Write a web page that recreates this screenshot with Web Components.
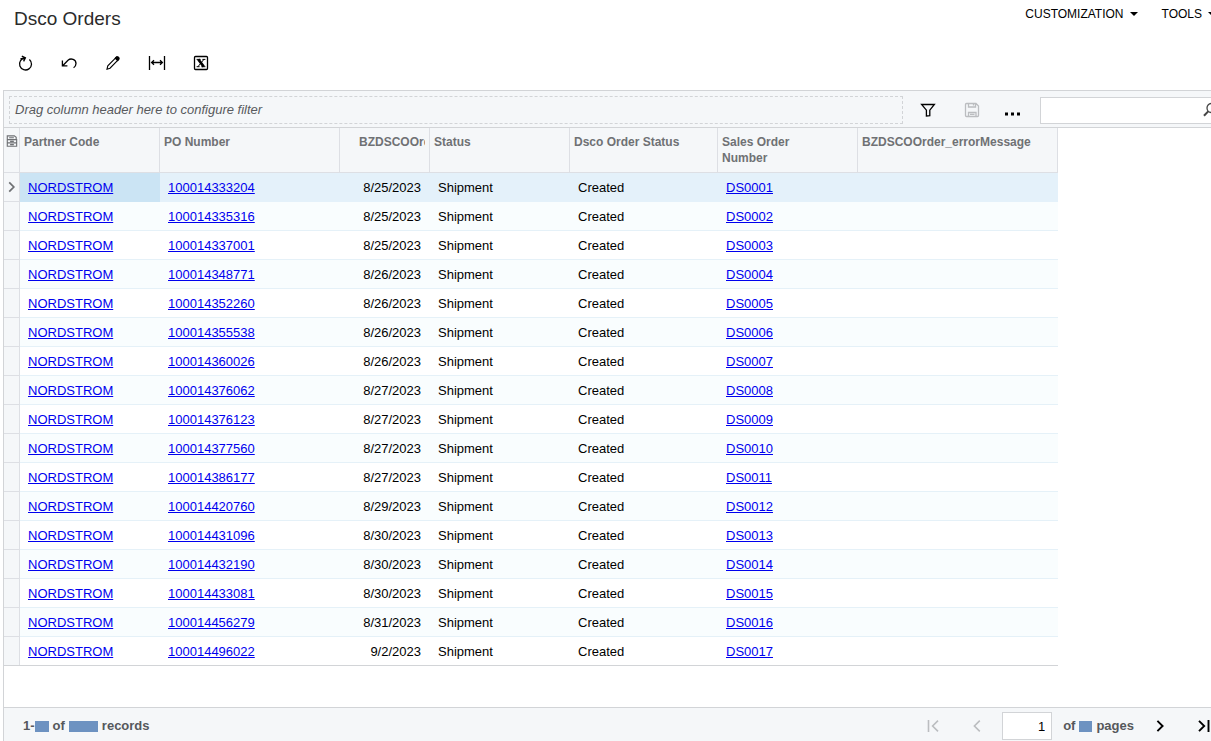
<!DOCTYPE html>
<html lang="en">
<head>
<meta charset="utf-8">
<title>Dsco Orders</title>
<style>
  html, body { margin: 0; }
  body {
    font: 13px/16px "Liberation Sans", Arial, sans-serif;
    color: #000;
    background: #fff;
    overflow: hidden;
    --line: #d2d4d7;
    --soft-line: #dddfe4;
    --panel: #f5f7f9;
  }
</style>
</head>
<body>
<orders-page></orders-page>

<script>
const define = (name, html, setup) => {
  const template = document.createElement('template');
  template.innerHTML = html;
  customElements.define(name, class extends HTMLElement {
    constructor() {
      super();
      this.attachShadow({ mode: 'open' }).append(template.content.cloneNode(true));
    }
    connectedCallback() { if (setup) setup(this, this.shadowRoot); }
  });
};

const icons = {
  refresh: '<path d="M8 3A6 6 0 1 0 12.4 4.4M4.8 1.2L8.4 2.9 6.6 6.4M3.4 3.9L8 3"/>',
  undo: '<path d="M2.2 10.2L7 5.2C10 2.8 15 4.4 15 8.6c0 1.7-.9 3.2-2.4 4.2M1.4 5.6v5.2h5"/>',
  edit: '<path d="M2 14.2l.8-3.4 8.6-8.6c1.4-.8 3 .8 2.2 2.2L5 13.2z" stroke-width="1.1"/><path d="M10.4 3.2l2.3 2.3 1.2-1.5c.3-1.3-.9-2.5-2.2-2.1z" fill="currentColor"/>',
  fit: '<path d="M.5 1v14M15.5 1v14"/><path d="M2.5 7.5h11M5 5.2L2.6 7.5 5 9.8M11 5.2l2.4 2.3L11 9.8"/>',
  excel: '<rect x="1.5" y="1.5" width="13" height="13" rx="1"/><path d="M5.3 4.4l5.4 7.2" stroke-width="2.6"/><path d="M10.9 4.4L5 11.6" stroke-width="1"/><path d="M3.6 4.4h4M9.4 4.4h3M3.6 11.7h3M8.4 11.7h4" stroke-width="1"/>',
  filter: '<path d="M1.6 2.5h12.8L9.8 8.2v5.4L6.4 14V8.2z"/>',
  save: '<path d="M1.5 2.5q0-1 1-1H12l2.5 2.5v9.5q0 1-1 1h-11q-1 0-1-1zM4.5 1.5V5H11.5V1.5M9.5 2v1.5M4.5 14.5v-4H12v4M6 12.3h4.5"/>',
  more: '<path d="M-3 10.5h3v3h-3zM3 10.5h3v3H3zM9 10.5h3v3H9z" fill="currentColor" stroke="none"/>',
  search: '<circle cx="9.5" cy="6" r="4.5"/><path d="M6.2 9.4L2 13.8" stroke-width="2"/>',
  first: '<path d="M3.5 2v12M13 2.6L7.6 8l5.4 5.4"/>',
  prev: '<path d="M10.8 2.6L5.4 8l5.4 5.4"/>',
  next: '<path d="M5.4 2.8L10.6 8l-5.2 5.2"/>',
  last: '<path d="M3 2.8L8.2 8 3 13.2M12.5 2v12"/>',
  settings: '<path d="M3.5 5.5v-3.5h7.5l2 1.5v2M5.5 4h5M3.5 6h10v7h-10zM3.5 9.5h10M6.5 7.8h4M6.5 11.3h4"/>',
};

define('app-icon', `
  <style>
    :host { display: inline-flex; flex: none; width: 16px; height: 16px; }
    svg { width: 100%; height: 100%; overflow: visible; fill: none; stroke: currentColor; stroke-width: var(--stroke, 1.3); }
  </style>
  <svg viewBox="0 0 16 16" aria-hidden="true"></svg>
`, (el, root) => { root.querySelector('svg').innerHTML = icons[el.getAttribute('name')]; });

define('icon-button', `
  <style>
    :host { display: inline-flex; flex: none; width: 44px; height: 32px; }
    button {
      display: flex; align-items: center; justify-content: center;
      width: 100%; padding: 0; border: 0; background: none; color: #000; font: inherit;
    }
    button:disabled { color: #bbbdc0; }
  </style>
  <button type="button"></button>
`, (el, root) => {
  const button = root.querySelector('button');
  const icon = document.createElement('app-icon');
  icon.setAttribute('name', el.getAttribute('icon'));
  button.replaceChildren(icon);
  button.setAttribute('aria-label', el.getAttribute('label'));
  button.disabled = el.hasAttribute('disabled');
});

define('menu-button', `
  <style>
    :host { display: inline-flex; }
    button {
      display: flex; align-items: center; gap: 6px; padding: 0; border: 0;
      background: none; color: #000; font: inherit; font-size: 12px; white-space: nowrap;
    }
    i { border: 4px solid transparent; border-top-color: #000; border-bottom: 0; }
  </style>
  <button type="button" aria-haspopup="menu"><slot></slot><i></i></button>
`);

define('page-header', `
  <style>
    :host { display: flex; justify-content: space-between; align-items: flex-start; padding: 6px 11px 0 14px; }
    h1 { margin: 0; font-size: 19px; line-height: 26px; font-weight: 400; color: #2b2b2b; }
    nav { display: flex; gap: 24px; }
  </style>
  <h1><slot></slot></h1>
  <nav><slot name="menu"></slot></nav>
`);

define('action-toolbar', `
  <style>:host { display: flex; padding: 15px 3px 11px; }</style>
  <slot></slot>
`);

define('filter-bar', `
  <style>
    :host {
      display: flex; align-items: center; box-sizing: border-box; height: 37px; padding: 2px 4px 0 5px;
      background: var(--panel); border-bottom: 1px solid var(--line);
    }
    .drop {
      flex: 1; padding: 5px; border: 1px dashed var(--line);
      font-style: italic; color: #585a5d; white-space: nowrap;
    }
    .tools { display: flex; padding: 0 2px 0 3px; }
    .search {
      display: flex; align-items: center; box-sizing: border-box; width: 182px; height: 27px;
      padding-right: 3px; background: #fff; border: 1px solid var(--line); color: #444;
    }
    input { flex: 1; min-width: 0; height: 100%; box-sizing: border-box; padding: 0 4px; border: 0; outline: 0; background: none; font: inherit; }
  </style>
  <div class="drop">Drag column header here to configure filter</div>
  <div class="tools">
    <icon-button icon="filter" label="Filter"></icon-button>
    <icon-button icon="save" label="Save filter" disabled></icon-button>
    <icon-button icon="more" label="More"></icon-button>
  </div>
  <label class="search"><input type="text" aria-label="Search"><app-icon name="search"></app-icon></label>
`);

const orders = [
  ['100014333204', '8/25/2023'], ['100014335316', '8/25/2023'], ['100014337001', '8/25/2023'],
  ['100014348771', '8/26/2023'], ['100014352260', '8/26/2023'], ['100014355538', '8/26/2023'],
  ['100014360026', '8/26/2023'], ['100014376062', '8/27/2023'], ['100014376123', '8/27/2023'],
  ['100014377560', '8/27/2023'], ['100014386177', '8/27/2023'], ['100014420760', '8/29/2023'],
  ['100014431096', '8/30/2023'], ['100014432190', '8/30/2023'], ['100014433081', '8/30/2023'],
  ['100014456279', '8/31/2023'], ['100014496022', '9/2/2023'],
];

define('orders-grid', `
  <style>
    :host { display: block; flex: 1; padding-bottom: 41px; }
    table { width: 1054px; table-layout: fixed; border-collapse: separate; border-spacing: 0; border-bottom: 1px solid var(--line); }
    th {
      box-sizing: border-box; height: 45px; padding: 6px 4px 0; vertical-align: top; text-align: left;
      font-size: 12px; line-height: 16px; font-weight: 700; color: #6f7174; background: var(--panel);
      border-right: 1px solid var(--soft-line); border-bottom: 1px solid var(--soft-line);
    }
    th.date { padding-left: 19px; }
    th.date span { display: block; overflow: hidden; white-space: nowrap; }
    th:first-child { padding: 6px 0 0; }
    td {
      box-sizing: border-box; height: 29px; padding: 2px 8px 0; white-space: nowrap;
      border-bottom: 1px solid #e5f1f8;
    }
    td.date { text-align: right; padding-right: 9px; }
    td:first-child {
      padding: 0; background: var(--panel); color: #6f7174;
      border-right: 1px solid var(--soft-line); border-bottom-color: var(--soft-line);
    }
    tr:nth-child(even) td:not(:first-child) { background: #f9fdfe; }
    tbody tr:first-child td:not(:first-child) { background: #e4f1fa; border-bottom-color: #e4f1fa; }
    tbody tr:first-child td:nth-child(2) { background: #cbe4f4; border-bottom-color: #cbe4f4; }
    tbody tr:last-child td { height: 28px; border-bottom: 0; }
    a { color: #00e; text-decoration: underline; }
    app-icon { display: flex; width: 15px; height: 15px; }
    td app-icon { --stroke: 2; height: 14px; }
    th app-icon { --stroke: 1.2; }
  </style>
  <table>
    <colgroup>
      <col style="width:16px"><col style="width:140px"><col style="width:180px"><col style="width:90px">
      <col style="width:140px"><col style="width:148px"><col style="width:140px"><col style="width:200px">
    </colgroup>
    <thead><tr>
      <th scope="col" aria-label="Row settings"><app-icon name="settings"></app-icon></th>
      <th scope="col">Partner Code</th><th scope="col">PO Number</th>
      <th scope="col" class="date"><span>BZDSCOOrd</span></th>
      <th scope="col">Status</th><th scope="col">Dsco Order Status</th>
      <th scope="col">Sales Order<br>Number</th><th scope="col">BZDSCOOrder_errorMessage</th>
    </tr></thead>
    <tbody></tbody>
  </table>
`, (el, root) => {
  root.querySelector('tbody').innerHTML = orders.map(([po, date], i) => `<tr>
    <td>${i ? '' : '<app-icon name="next"></app-icon>'}</td>
    <td><a href="#partner">NORDSTROM</a></td><td><a href="#po-${po}">${po}</a></td>
    <td class="date">${date}</td><td>Shipment</td><td>Created</td>
    <td><a href="#so-${i + 1}">DS${String(i + 1).padStart(4, '0')}</a></td><td></td></tr>`).join('');
});

define('pager-bar', `
  <style>
    :host {
      display: flex; align-items: center; justify-content: space-between; padding: 4px 0 1px 19px;
      background: var(--panel); border-top: 1px solid var(--line); font-weight: 700; color: #55585c;
    }
    .count, .pages, .total { display: flex; align-items: center; }
    .count, .total { gap: 4px; }
    .total { margin: 0 4px 0 11px; }
    .mask { height: 11px; background: #6d92c1; }
    .m { width: 14px; } .l { width: 29px; } .s { width: 13px; }
    .first { display: flex; align-items: center; }
    input {
      box-sizing: border-box; width: 50px; height: 28px; padding: 0 6px; margin-left: 3px; text-align: right;
      border: 1px solid var(--line); background: #fff; color: #000; font: inherit; font-weight: 400;
    }
    icon-button { height: 28px; }
    icon-button:not([disabled]) { --stroke: 1.9; }
    icon-button[disabled] { --stroke: 1.6; }
  </style>
  <div class="count"><span class="first">1-<span class="mask m"></span></span><span>of</span><span class="mask l"></span><span>records</span></div>
  <div class="pages">
    <icon-button icon="first" label="First page" disabled></icon-button>
    <icon-button icon="prev" label="Previous page" disabled></icon-button>
    <input type="text" value="1" aria-label="Page">
    <div class="total"><span>of</span><span class="mask s"></span><span>pages</span></div>
    <icon-button icon="next" label="Next page"></icon-button>
    <icon-button icon="last" label="Last page"></icon-button>
  </div>
`);

define('orders-page', `
  <style>
    :host { display: flex; flex-direction: column; min-height: 100vh; margin-right: -16px; }
    main { flex: 1; display: flex; flex-direction: column; margin-left: 3px; border: 1px solid var(--line); border-bottom: 0; }
  </style>
  <page-header>Dsco Orders
    <menu-button slot="menu">CUSTOMIZATION</menu-button>
    <menu-button slot="menu">TOOLS</menu-button>
  </page-header>
  <action-toolbar>
    <icon-button icon="refresh" label="Refresh"></icon-button>
    <icon-button icon="undo" label="Undo"></icon-button>
    <icon-button icon="edit" label="Edit"></icon-button>
    <icon-button icon="fit" label="Fit columns"></icon-button>
    <icon-button icon="excel" label="Export to Excel"></icon-button>
  </action-toolbar>
  <main>
    <filter-bar></filter-bar>
    <orders-grid></orders-grid>
    <pager-bar></pager-bar>
  </main>
`);
</script>
</body>
</html>
